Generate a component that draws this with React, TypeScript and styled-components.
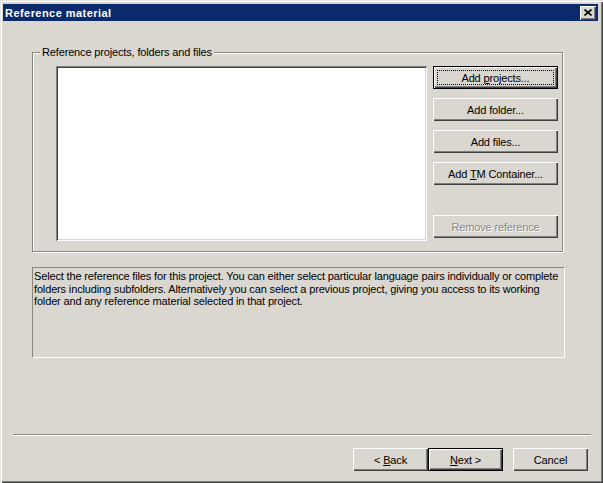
import React from 'react';
import styled, { createGlobalStyle, css } from 'styled-components';

const face = '#dad7d1';

const GlobalStyle = createGlobalStyle`
    html, body {
        margin: 0;
        padding: 0;
        background: ${face};
    }
    body {
        font-family: 'Liberation Sans', Arial, sans-serif;
        font-size: 11px;
        letter-spacing: -0.15px;
        color: #000;
    }
`;

const Window = styled.div`
    width: 603px;
    height: 483px;
    box-sizing: border-box;
    padding: 4px 5px 3px 3px;
    background: ${face};
    display: flex;
    flex-direction: column;
    box-shadow: inset 1px 1px 0 #e8e6e2, inset 2px 2px 0 #fff,
        inset -1px -1px 0 #404040, inset -2px -2px 0 #808080;
`;

const TitleBar = styled.div`
    height: 17px;
    background: #0b2a6c;
    display: flex;
    align-items: center;
    justify-content: space-between;
    padding: 0 2px 0 2px;
`;

const Title = styled.span`
    color: #fff;
    font-weight: bold;
    font-size: 11px;
    letter-spacing: 0.45px;
`;

const CloseButton = styled.div`
    width: 16px;
    height: 14px;
    background: ${face};
    display: flex;
    align-items: center;
    justify-content: center;
    box-shadow: inset 1px 1px 0 #fff, inset -1px -1px 0 #404040,
        inset -2px -2px 0 #808080;
`;

const Content = styled.div`
    padding: 31px 33px 0 29px;
    display: flex;
    flex-direction: column;
`;

const GroupBox = styled.div`
    position: relative;
    height: 200px;
    margin-right: 2px;
    box-sizing: border-box;
    border: 1px solid #8a8782;
    box-shadow: 1px 1px 0 #fff, inset 1px 1px 0 #fff;
    padding: 13px 4px 10px 23px;
    display: flex;
    gap: 6px;
`;

const GroupLabel = styled.span`
    position: absolute;
    top: -7px;
    left: 7px;
    padding: 0 2px;
    background: ${face};
    line-height: 13px;
`;

const ListBox = styled.div`
    flex: 1;
    background: #fff;
    box-shadow: inset 1px 1px 0 #808080, inset -1px -1px 0 #fff,
        inset 2px 2px 0 #404040, inset -2px -2px 0 ${face};
`;

const ButtonColumn = styled.div`
    width: 125px;
    display: flex;
    flex-direction: column;
    gap: 9px;
    padding-bottom: 3px;
`;

const Gap = styled.div`
    flex: 1;
`;

const Button = styled.div<{ $default?: boolean; $focus?: boolean; $disabled?: boolean; $w?: number }>`
    position: relative;
    height: 23px;
    width: ${(p) => (p.$w ? `${p.$w}px` : 'auto')};
    box-sizing: border-box;
    background: ${face};
    display: flex;
    align-items: center;
    justify-content: center;
    box-shadow: inset 1px 1px 0 #fff, inset -1px -1px 0 #404040,
        inset -2px -2px 0 #808080;
    ${(p) =>
        p.$default &&
        css`
            border: 1px solid #000;
        `}
    ${(p) =>
        p.$focus &&
        css`
            &::after {
                content: '';
                position: absolute;
                inset: 3px;
                border: 1px dotted #000;
            }
        `}
    ${(p) =>
        p.$disabled &&
        css`
            color: #8a8782;
            text-shadow: 1px 1px 0 #fff;
        `}
`;

const Description = styled.div`
    margin-top: 15px;
    height: 91px;
    box-sizing: border-box;
    border-top: 1px solid #8a8782;
    border-left: 1px solid #8a8782;
    border-bottom: 1px solid #fff;
    border-right: 1px solid #fff;
    padding: 2px 4px 0 1px;
    line-height: 12.5px;
`;

const Spacer = styled.div`
    flex: 1;
`;

const Separator = styled.div`
    height: 1px;
    margin: 0 7px 0 10px;
    background: #8a8782;
    border-bottom: 1px solid #fff;
`;

const Footer = styled.div`
    display: flex;
    justify-content: flex-end;
    gap: 0;
    padding: 12px 10px 9px 0;
`;

const CancelButton = styled(Button)`
    margin-left: 10px;
`;

const Key = styled.span`
    text-decoration: underline;
`;

const CloseIcon = () => (
    <svg width="8" height="7" viewBox="0 0 8 7">
        <path d="M0.5 0.5 L7.5 6.5 M7.5 0.5 L0.5 6.5" stroke="#000" strokeWidth="1.6" />
    </svg>
);

export default function App() {
    return (
        <>
            <GlobalStyle />
            <Window>
                <TitleBar>
                    <Title>Reference material</Title>
                    <CloseButton>
                        <CloseIcon />
                    </CloseButton>
                </TitleBar>
                <Content>
                    <GroupBox>
                        <GroupLabel>Reference projects, folders and files</GroupLabel>
                        <ListBox />
                        <ButtonColumn>
                            <Button $default $focus>
                                Add&nbsp;<Key>p</Key>rojects...
                            </Button>
                            <Button>Add folder...</Button>
                            <Button>Add files...</Button>
                            <Button>
                                Add&nbsp;<Key>T</Key>M Container...
                            </Button>
                            <Gap />
                            <Button $disabled>Remove reference</Button>
                        </ButtonColumn>
                    </GroupBox>
                    <Description>
                        Select the reference files for this project. You can either select particular
                        language pairs individually or complete folders including subfolders.
                        Alternatively you can select a previous project, giving you access to its
                        working folder and any reference material selected in that project.
                    </Description>
                </Content>
                <Spacer />
                <Separator />
                <Footer>
                    <Button $w={75}>
                        &lt;&nbsp;<Key>B</Key>ack
                    </Button>
                    <Button $w={75} $default>
                        <Key>N</Key>ext &gt;
                    </Button>
                    <CancelButton $w={75}>Cancel</CancelButton>
                </Footer>
            </Window>
        </>
    );
}
